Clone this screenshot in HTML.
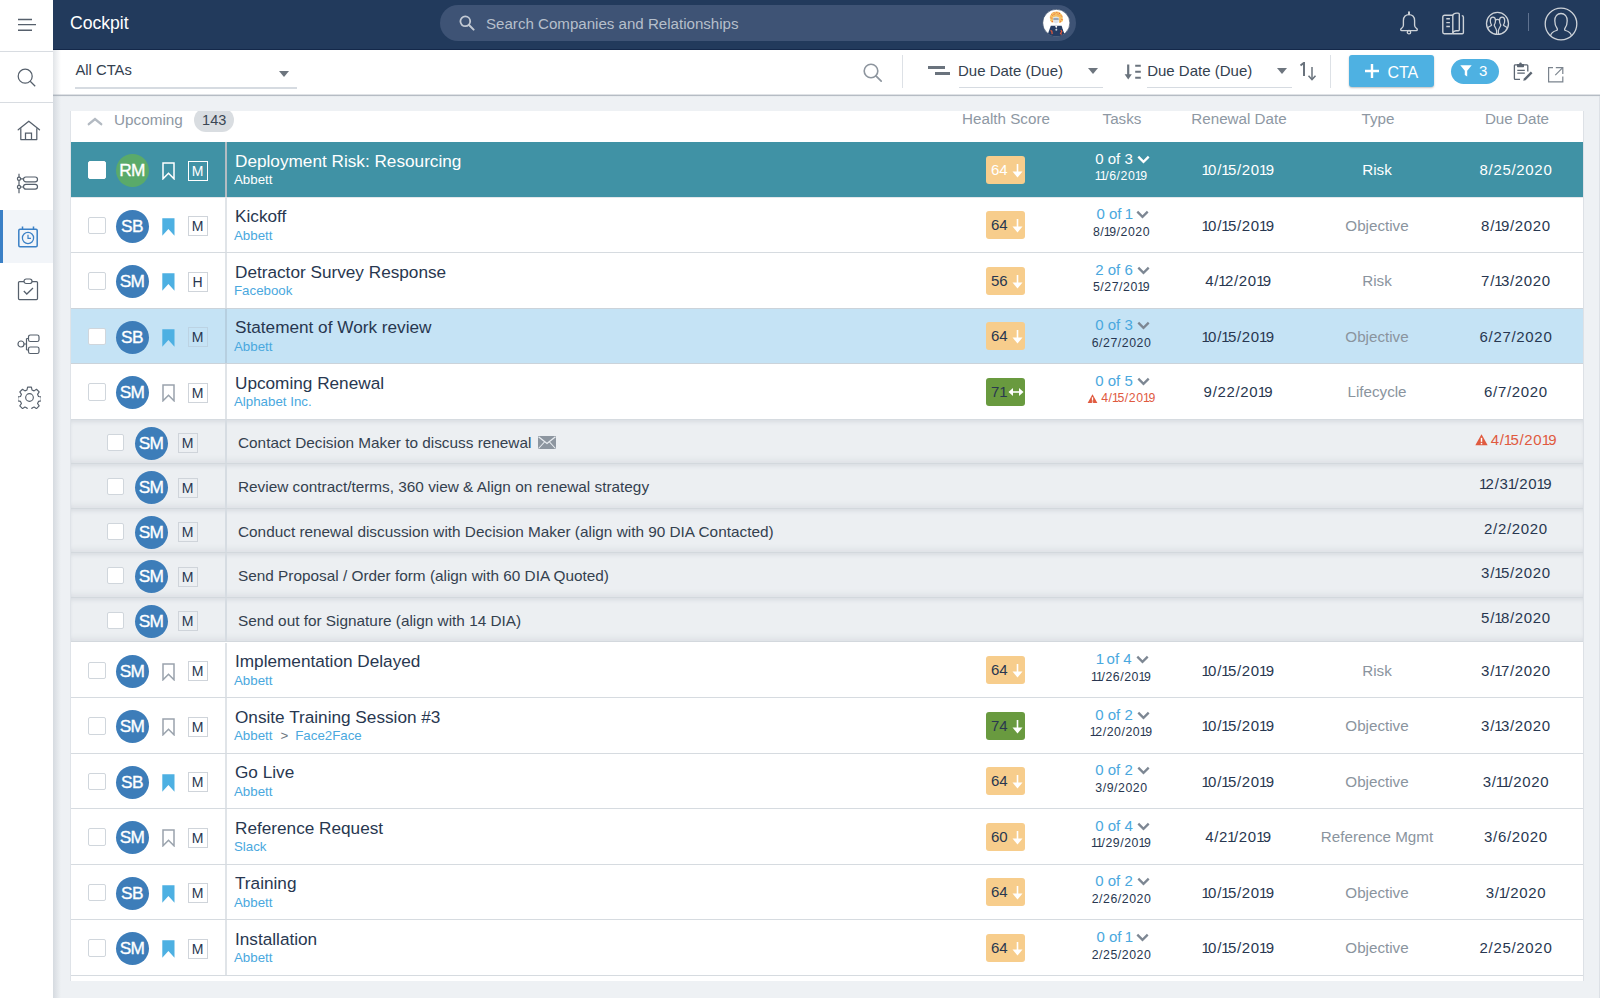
<!DOCTYPE html>
<html><head><meta charset="utf-8"><title>Cockpit</title>
<style>
*{box-sizing:border-box;margin:0;padding:0}
html,body{width:1600px;height:998px;overflow:hidden}
body{position:relative;background:#eef1f4;font-family:"Liberation Sans",sans-serif;color:#283750}
.abs{position:absolute}
#sidebar{position:absolute;left:0;top:0;width:53px;height:998px;background:#fff;z-index:3}
#sidebar .sep{position:absolute;left:0;width:53px;height:1px;background:#d8dce1}
#sidebar .active{position:absolute;left:0;top:210px;width:53px;height:53px;background:#f2f5f9}
#sidebar .active .bar{position:absolute;left:0;top:0;width:3px;height:53px;background:#3b80c6}
#sidebar svg{position:absolute}
#shadowL{position:absolute;left:53px;top:50px;width:8px;height:948px;background:linear-gradient(to right,rgba(150,160,172,0.28),rgba(150,160,172,0));z-index:2}
#header{position:absolute;left:53px;top:0;width:1547px;height:50px;background:#223a5c;border-bottom:1px solid #14284a}
#header .logo{position:absolute;left:17px;top:13px;font-size:17.6px;line-height:20px;color:#fff}
#search{position:absolute;left:387px;top:5px;width:636px;height:36px;border-radius:18px;background:#3e5375}
#search .ph{position:absolute;left:46px;top:10px;font-size:15.1px;line-height:18px;color:#b6bfcb;white-space:nowrap}
#toolbar{position:absolute;left:53px;top:50px;width:1547px;height:45.5px;background:#fff;border-bottom:1.5px solid #b9bfc6}
#toolbar .tshadow{position:absolute;left:0;top:44px;width:1547px;height:3px;background:linear-gradient(to bottom,rgba(170,178,188,0.45),rgba(170,178,188,0))}
.tt{position:absolute;white-space:nowrap;font-size:15px;line-height:18px;color:#34414f}
.uline{position:absolute;height:1.5px;background:#d6dbe1}
.ddtri{position:absolute;width:0;height:0;border-left:5.5px solid transparent;border-right:5.5px solid transparent;border-top:6px solid #6d757e}
.vsep{position:absolute;width:1px;background:#dde1e6}
#ctabtn{position:absolute;left:1296px;top:4.5px;width:85px;height:32.5px;background:#4eb1e2;border-radius:3px;box-shadow:0 1px 2px rgba(0,0,0,0.25)}
#ctabtn .lbl{position:absolute;left:38.5px;top:7px;font-size:16px;line-height:19px;color:#fff}
#filt{position:absolute;left:1398px;top:9px;width:47.5px;height:25.2px;border-radius:13px;background:#4eb1e2}
#filt .n{position:absolute;left:28px;top:4px;font-size:15px;line-height:18px;color:#fff}
#card{position:absolute;left:70px;top:111px;width:1514px;height:870px;background:#fff;border-left:1px solid #dfe3e8;border-right:1px solid #dde1e6}
#redge{position:absolute;left:1598.5px;top:96px;width:1.5px;height:902px;background:#dde1e6}
#thead{position:absolute;left:0;top:0;width:1512px;height:31px;overflow:hidden}
#thead .upchev{position:absolute;left:16px;top:4.5px}
#thead .upc{position:absolute;left:43px;top:0px;font-size:15.3px;line-height:18px;color:#8e98a3}
#thead .badge{position:absolute;left:123.2px;top:-3px;width:40px;height:24px;border-radius:12px;background:#d9dde1;font-size:14.5px;line-height:24px;text-align:center;color:#3a4654}
#thead .th{position:absolute;top:-0.8px;font-size:15.2px;line-height:18px;color:#8e98a3;text-align:center;white-space:nowrap}
#rows{position:absolute;left:0;top:0;width:1600px;height:998px}
.row{position:absolute;left:71px;width:1512px;background:#fff;border-bottom:1px solid #d6dbe0}
.row>div{position:absolute;white-space:nowrap}
.row.teal{background:#4092a5;border-bottom-color:#e3e7eb}
.row.lightblue{background:#c5e3f5;border-bottom-color:#cbd3da;box-shadow:0 -1px 0 #cbd3da}
.row.sub{background:#eceff2;border-bottom:1px solid #d3d8dd;box-shadow:inset 0 4px 4px -2px rgba(140,150,162,0.2),inset 0 -6px 5px -3px rgba(140,150,162,0.15)}
.cb{left:17px;width:17.6px;height:17.6px;border:1px solid #d0d6dc;border-radius:2px;background:#fff}
.teal .cb{border-color:#fff}
.scb{left:36px;width:17px;height:17px}
.av{left:44.5px;width:33px;height:33px;border-radius:50%;color:#fff;font-size:17.3px;line-height:32.6px;text-align:center;letter-spacing:-0.6px;-webkit-text-stroke:0.35px #fff}
.av.blue{background:#3d7db9}
.av.green{background:#5aaa6a}
.sav{left:63.5px}
.bmw{left:90.5px;width:14px;height:18px}
.bmw svg{display:block}
.pr{left:116.5px;width:20px;height:20px;border:1px solid #cfd4da;font-size:14px;line-height:18px;text-align:center;color:#283750;background:transparent}
.teal .pr{border-color:#fff;color:#fff}
.lightblue .pr{border-color:#bcd3e3}
.spr{left:106.5px}
.vdiv{left:154px;top:0;width:1.8px;height:100%;background:#e0e4e8}
.teal .vdiv{background:#b3bcc2}
.lightblue .vdiv{background:#b6cfe0}
.sub .vdiv{background:#d6dce2}
.title{left:164px;top:8.6px;font-size:17.2px;line-height:20px;color:#283750}
.teal .title{color:#fff}
.comp{left:163px;top:30.1px;font-size:13.3px;line-height:16px;color:#4aa8de}
.comp .gt{display:inline-block;margin:0 7px 0 8px;color:#6b7580}
.teal .comp{color:#fff}
.score{left:915px;width:39px;height:28px;border-radius:3px}
.score.orange{background:#f7cd8c}
.score.green{background:#699a3f}
.score .sn{position:absolute;left:5px;top:5px;font-size:15px;line-height:18px;color:#283750}
.teal .score .sn{color:#fff}
.score.green .sn{color:#2a3850}
.score .arr{position:absolute;left:26px;top:8px}
.score .arr2{position:absolute;left:22px;top:9px}
.tasks{left:989.5px;width:120px;text-align:center;top:7.6px;font-size:15px;line-height:17px;color:#4aa8de}
.teal .tasks{color:#fff}
.tasks .chev{display:inline-block;margin-left:4px;vertical-align:0px;margin-right:-4px}
.tdate{left:1000.5px;width:100px;text-align:center;top:27.3px;font-size:12.3px;line-height:14px;color:#283750}
.teal .tdate{color:#fff}
.tdate.warnc{color:#e05a3f}
.warn{display:inline-block;margin-right:3px;vertical-align:-1px}
.ren{left:1107.5px;width:120px;text-align:center;top:19.2px;font-size:15px;line-height:17px;color:#283750}
.typ{left:1246px;width:120px;text-align:center;top:19.1px;font-size:15.2px;line-height:17px;color:#8a949e}
.due{left:1385px;width:120px;text-align:center;top:19.1px;font-size:15px;line-height:17px;color:#283750}
.teal .ren,.teal .typ,.teal .due{color:#fff}
.stext{left:167px;top:13.8px;font-size:15.35px;line-height:17px;color:#34414f}
.stext .mail{display:inline-block;margin-left:7px;vertical-align:-1px}
.sdue{left:1385px;width:120px;text-align:center;top:11px;font-size:15px;line-height:17px;color:#283750}
.sdue.warnc{color:#e05a3f}

i.o{font-style:normal;letter-spacing:-0.11em;margin-left:-0.05em}
.dg{letter-spacing:0.045em}

</style></head>
<body>
<div id="sidebar">
<svg style="left:17px;top:18px" width="20" height="14" viewBox="0 0 20 14"><path d="M1 1.5H15M1 6.6H19M1 12.3H15" stroke="#56606c" stroke-width="1.4"/></svg>
<div class="sep" style="top:51px"></div>
<svg style="left:17px;top:68px" width="20" height="20" viewBox="0 0 20 20"><circle cx="8.2" cy="8.2" r="7" fill="none" stroke="#56606c" stroke-width="1.25"/><path d="M13.2 13.2L18.2 18.2" stroke="#56606c" stroke-width="1.25"/></svg>
<div class="sep" style="top:102px"></div>
<svg style="left:17px;top:120px" width="24" height="21" viewBox="0 0 24 21"><path d="M1.2 9.8L11.8 1.2L22.5 9.8" fill="none" stroke="#56606c" stroke-width="1.25" stroke-linecap="round" stroke-linejoin="round"/><path d="M3.8 8.2V19.5H19.8V8.2" fill="none" stroke="#56606c" stroke-width="1.25" stroke-linejoin="round"/><path d="M8.5 19.5V13.2H14.5V19.5" fill="none" stroke="#56606c" stroke-width="1.25"/></svg>
<svg style="left:16px;top:173px" width="23" height="21" viewBox="0 0 23 21"><path d="M3 0.8V20.2" stroke="#56606c" stroke-width="1.2"/><circle cx="3" cy="5.8" r="1.6" fill="#fff" stroke="#56606c" stroke-width="1.2"/><circle cx="3" cy="14" r="1.6" fill="#fff" stroke="#56606c" stroke-width="1.2"/><path d="M4.6 5.8H7.5M4.6 14H7.5" stroke="#56606c" stroke-width="1.2"/><rect x="7.5" y="4" width="14" height="4.8" rx="2.4" fill="none" stroke="#56606c" stroke-width="1.2"/><rect x="7.5" y="11.4" width="14" height="4.8" rx="2.4" fill="none" stroke="#56606c" stroke-width="1.2"/></svg>
<div class="active"><div class="bar"></div></div>
<svg style="left:17px;top:226px" width="22" height="22" viewBox="0 0 22 22"><rect x="1.8" y="3.2" width="18.4" height="17.5" rx="1.2" fill="none" stroke="#3b80c6" stroke-width="1.5"/><path d="M5.5 0.5V3.5M16.5 0.5V3.5" stroke="#3b80c6" stroke-width="1.5"/><circle cx="11" cy="12" r="5.6" fill="none" stroke="#3b80c6" stroke-width="1.25"/><path d="M11 8.8V12.3H14" fill="none" stroke="#3b80c6" stroke-width="1.2"/></svg>
<svg style="left:17px;top:278px" width="22" height="23" viewBox="0 0 22 23"><rect x="1.5" y="3.5" width="19" height="18" rx="1" fill="none" stroke="#56606c" stroke-width="1.25"/><rect x="7" y="1" width="8" height="4.5" rx="2.2" fill="#fff" stroke="#56606c" stroke-width="1.2"/><path d="M6.8 13L9.8 16L16 10" fill="none" stroke="#56606c" stroke-width="1.25"/></svg>
<svg style="left:17px;top:334px" width="24" height="21" viewBox="0 0 24 21"><circle cx="4" cy="10" r="3" fill="none" stroke="#56606c" stroke-width="1.2"/><path d="M7 10H9.5M9.5 4.5V16M9.5 4.5H11.5M9.5 16H11.5" fill="none" stroke="#56606c" stroke-width="1.2"/><rect x="11.5" y="1" width="10.5" height="6.5" rx="1.8" fill="none" stroke="#56606c" stroke-width="1.2"/><rect x="11.5" y="13" width="10.5" height="6.5" rx="1.8" fill="none" stroke="#56606c" stroke-width="1.2"/></svg>
<svg style="left:17.5px;top:385.5px" width="23" height="23" viewBox="0 0 24 24"><path d="M10 1.2h4l.6 2.9 2.2 1 2.5-1.7 2.8 2.8-1.7 2.5 1 2.2 2.9.6v4l-2.9.6-1 2.2 1.7 2.5-2.8 2.8-2.5-1.7-2.2 1-.6 2.9h-4l-.6-2.9-2.2-1-2.5 1.7-2.8-2.8 1.7-2.5-1-2.2-2.9-.6v-4l2.9-.6 1-2.2-1.7-2.5 2.8-2.8 2.5 1.7 2.2-1z" fill="none" stroke="#56606c" stroke-width="1.2" stroke-linejoin="round"/><circle cx="12" cy="12" r="4" fill="none" stroke="#56606c" stroke-width="1.2"/></svg>
</div>
<div id="shadowL"></div>

<div id="header">
<div class="logo" style="top:12.9px">Cockpit</div>
<div id="search">
<svg style="position:absolute;left:19px;top:10px" width="16" height="16" viewBox="0 0 16 16"><circle cx="6.3" cy="6.3" r="4.9" fill="none" stroke="#c3cad4" stroke-width="1.8"/><path d="M9.8 9.8L14.6 14.6" stroke="#c3cad4" stroke-width="2" stroke-linecap="round"/></svg>
<div class="ph">Search Companies and Relationships</div>
<svg style="position:absolute;left:602px;top:4.3px" width="28" height="28" viewBox="0 0 28 28"><defs><clipPath id="avc"><circle cx="14.3" cy="13.9" r="13.4"/></clipPath></defs><circle cx="14.3" cy="13.9" r="13.6" fill="#fff" stroke="#203656" stroke-width="0.6"/><g clip-path="url(#avc)"><path d="M8.5 10.5C7.2 9 7.8 6.5 9 5.5C9.5 3.5 11.5 2.6 13.5 2.8C15.5 2.2 18 3 19 4.8C20.5 5.8 21.2 8 20.6 9.6C21.8 10.8 21 12.8 19.5 13C18.8 14 17.5 14.2 16.8 13.5L17.2 8.5H11L11.5 13.2C10.5 14 9 13.2 8.8 12.2C8 12 7.8 11 8.5 10.5Z" fill="#f5c063"/><path d="M9.5 5.5L10.5 6.5M12 3.5L13 4.5M14.5 3.2L15.5 4.2M17 4L18 5M19 6.5L19.8 7.5M9 8.5L9.8 9.5M19.5 10L20.3 11M10 12L10.8 13M18.2 12L19 12.8M11.5 5L12.3 5.8M16 5.5L16.8 6.3" stroke="#e4573b" stroke-width="0.9"/><ellipse cx="14" cy="10.8" rx="2.9" ry="3.4" fill="#dbe2ea"/><path d="M11.3 10H16.7" stroke="#4d5e73" stroke-width="0.9"/><path d="M13.3 14H14.7V17H13.3Z" fill="#f4f6f8"/><path d="M8.8 16.8H19.6L23.5 28H4.8Z" fill="#243c63"/><path d="M13 16.8L14.2 19.5L15.4 16.8" fill="#fff"/><circle cx="14.3" cy="20.8" r="1" fill="#c8d2dc"/><path d="M8.5 21.5L9.8 22.2L10.2 25.2M18.8 21L19.8 22.5L18.5 24.5L19.6 25.5" fill="none" stroke="#e85a3a" stroke-width="1.2"/><path d="M21 19.5L23 24" stroke="#fff" stroke-width="1"/></g></svg>
</div>
</div>
<div id="toolbar"><div class="tshadow"></div></div>
<div id="tb" style="position:absolute;left:0;top:0;width:1600px;height:100px;z-index:4">
<!-- header icons -->
<svg style="position:absolute;left:1399px;top:11px" width="20" height="24" viewBox="0 0 20 24"><path d="M10 1.2V3.2" stroke="#cdd2d8" stroke-width="2" stroke-linecap="round"/><path d="M10 3.6C6.9 3.6 4.4 5.6 4.4 9.6V14.3C4.4 15.8 3.5 16.9 2.3 17.6C1.3 18.2 1.6 19.6 2.7 19.6H17.3C18.4 19.6 18.7 18.2 17.7 17.6C16.5 16.9 15.6 15.8 15.6 14.3V9.6C15.6 5.6 13.1 3.6 10 3.6Z" fill="none" stroke="#cdd2d8" stroke-width="1.35" stroke-linejoin="round"/><circle cx="10" cy="21.2" r="1.7" fill="none" stroke="#cdd2d8" stroke-width="1.3"/></svg>
<svg style="position:absolute;left:1441px;top:11.5px" width="24" height="23" viewBox="0 0 24 23"><path d="M11.8 21.7H3.2C2.4 21.7 1.8 21.1 1.8 20.3V5C1.8 4 2.6 3.3 3.6 3.3H11.8V21.7" fill="none" stroke="#cdd2d8" stroke-width="1.4" stroke-linejoin="round"/><path d="M11.8 3.3C12.3 1.8 13.8 1.1 15.5 1.1H17.2C17.9 1.1 18.3 1.5 18.3 2.2V17.8C18.3 18.4 17.9 18.7 17.3 18.7H15C13.3 18.7 12.2 19.5 11.8 20.8" fill="none" stroke="#cdd2d8" stroke-width="1.4" stroke-linejoin="round"/><path d="M20.8 3.6C21.8 3.6 22.4 4.2 22.4 5V20.4C22.4 21.1 21.9 21.7 21.2 21.7H11.8" fill="none" stroke="#cdd2d8" stroke-width="1.4" stroke-linejoin="round"/><path d="M5.3 6.8H8.9M5.3 10.6H8.9M5.3 14.5H8.9" stroke="#cdd2d8" stroke-width="1.4"/></svg>
<svg style="position:absolute;left:1485px;top:10.8px" width="25" height="25" viewBox="0 0 25 25"><circle cx="12.5" cy="12.4" r="11" fill="none" stroke="#cdd2d8" stroke-width="1.3"/><path d="M2.4 16.8C4 15.6 5.8 15.2 6.6 14.2C5.6 12.8 5.3 11 5.3 9.4C5.3 7.3 6.3 6.2 7.9 6.2C9.5 6.2 10.5 7.3 10.5 9.4C10.5 11 10.1 12.8 9.2 14.2C9.6 15.8 11.3 17.3 11.6 19.6V23.2" fill="none" stroke="#cdd2d8" stroke-width="1.25" stroke-linejoin="round"/><path d="M22.6 16.8C21 15.6 19.2 15.2 18.4 14.2C19.4 12.8 19.7 11 19.7 9.4C19.7 7.3 18.7 6.2 17.1 6.2C15.5 6.2 14.5 7.3 14.5 9.4C14.5 11 14.9 12.8 15.8 14.2C15.4 15.8 13.7 17.3 13.4 19.6V23.2" fill="none" stroke="#cdd2d8" stroke-width="1.25" stroke-linejoin="round"/><path d="M10.4 9.2Q12.5 7.6 14.6 9.2" fill="none" stroke="#cdd2d8" stroke-width="1.1"/></svg>
<div style="position:absolute;left:1527.5px;top:13px;width:1px;height:18px;background:#5f7290"></div>
<svg style="position:absolute;left:1544px;top:6.5px" width="34" height="34" viewBox="0 0 34 34"><circle cx="17" cy="17" r="15.8" fill="none" stroke="#cdd2d8" stroke-width="1.3"/><path d="M6.5 29C7 26 9 24.5 12.5 23.5C13.5 23.2 13.6 22 13 21.2C11.5 19.5 10.8 17 10.8 13.8C10.8 9.5 13.3 6.5 17 6.5C20.7 6.5 23.2 9.5 23.2 13.8C23.2 17 22.5 19.5 21 21.2C20.4 22 20.5 23.2 21.5 23.5C25 24.5 27 26 27.5 29" fill="none" stroke="#cdd2d8" stroke-width="1.3"/></svg>
<!-- toolbar -->
<div class="tt" style="left:75.5px;top:61.4px;font-size:14.75px">All CTAs</div>
<div class="ddtri" style="left:278.5px;top:70.7px"></div>
<div class="uline" style="left:75px;top:87px;width:222px"></div>
<svg style="position:absolute;left:863px;top:63px" width="20" height="20" viewBox="0 0 20 20"><circle cx="8" cy="8" r="6.8" fill="none" stroke="#8d959e" stroke-width="1.6"/><path d="M12.9 12.9L18.2 18.2" stroke="#8d959e" stroke-width="1.7" stroke-linecap="round"/></svg>
<div class="vsep" style="left:902px;top:54.5px;height:33px"></div>
<div style="position:absolute;left:928px;top:66.2px;width:17px;height:3.3px;background:#6a737d"></div>
<div style="position:absolute;left:934.8px;top:72.2px;width:15.6px;height:3.1px;background:#6a737d"></div>
<div class="tt" style="left:958px;top:61.5px">Due Date (Due)</div>
<div class="ddtri" style="left:1088px;top:67.5px"></div>
<div class="uline" style="left:958.5px;top:86.5px;width:144px"></div>
<svg style="position:absolute;left:1124px;top:64px" width="18" height="16" viewBox="0 0 18 16"><path d="M4.2 0.5V12" stroke="#6a737d" stroke-width="2.2"/><path d="M0.6 10.2H7.8L4.2 15.6Z" fill="#6a737d"/><path d="M11.2 1.8H16.8M11.2 7.8H16.8M11.2 13.8H16.8" stroke="#6a737d" stroke-width="2"/></svg>
<div class="tt" style="left:1147.2px;top:61.5px">Due Date (Due)</div>
<div class="ddtri" style="left:1277px;top:67.7px"></div>
<div class="uline" style="left:1147px;top:86.5px;width:144.6px"></div>
<svg style="position:absolute;left:1299px;top:62px" width="18" height="19" viewBox="0 0 18 19"><path d="M1.5 3.5L5 0.8V14" fill="none" stroke="#6a737d" stroke-width="2"/><path d="M13 5V17" stroke="#6a737d" stroke-width="1.5"/><path d="M9.5 13.8L13 17.6L16.5 13.8" fill="none" stroke="#6a737d" stroke-width="1.5"/></svg>
<div class="vsep" style="left:1330px;top:54.7px;height:33px"></div>
<div id="ctabtn" style="left:1348.9px;top:54.5px">
<svg style="position:absolute;left:16.3px;top:9.8px" width="14" height="14" viewBox="0 0 14 14"><path d="M7 0V14M0 7H14" stroke="#fff" stroke-width="2.4"/></svg>
<div class="lbl" style="top:8px">CTA</div></div>
<div id="filt" style="left:1451px;top:58.9px">
<svg style="position:absolute;left:9px;top:6.4px" width="12" height="12" viewBox="0 0 12 12"><path d="M0.3 0.3H11.7L7.2 5.8V11.6L4.8 10V5.8Z" fill="#fff"/></svg>
<div class="n" style="top:3.6px">3</div></div>
<svg style="position:absolute;left:1513px;top:61.5px" width="21" height="20" viewBox="0 0 21 20"><path d="M4.2 2.8H2.3C1.8 2.8 1.4 3.2 1.4 3.7V16.5C1.4 17 1.8 17.4 2.3 17.4H7" fill="none" stroke="#5c6672" stroke-width="1.3"/><path d="M10.8 2.8H13.9C14.4 2.8 14.8 3.2 14.8 3.7V9.5" fill="none" stroke="#5c6672" stroke-width="1.3"/><path d="M4 2H11V4.6C11 5 10.7 5.2 10.4 5.2H4.6C4.3 5.2 4 5 4 4.6Z" fill="#5c6672"/><circle cx="7.5" cy="1.6" r="1.2" fill="#5c6672"/><path d="M4.3 8.3H11.8M4.3 11.2H11.8" stroke="#5c6672" stroke-width="1.3"/><path d="M10.2 18.8L10.9 16.5L17.8 9.6L19.5 11.3L12.6 18.2Z" fill="#5c6672"/></svg>
<svg style="position:absolute;left:1547px;top:65.5px" width="17" height="17" viewBox="0 0 17 17"><path d="M6 1.6H1.6V15.8H15.8V10.5" fill="none" stroke="#7a838d" stroke-width="1.2"/><path d="M8.8 1.6H15.8V8" fill="none" stroke="#7a838d" stroke-width="1.2"/><path d="M15.5 1.9L8.3 9.1" stroke="#7a838d" stroke-width="1.2"/></svg>
</div>

<div id="card">
<div id="thead">
<svg class="upchev" width="16" height="10" viewBox="0 0 16 10"><path d="M1.8 8.2L8 3L14.2 8.2" fill="none" stroke="#b3bac2" stroke-width="2.4" stroke-linecap="round"/></svg>
<span class="upc">Upcoming</span><span class="badge">143</span>
<span class="th" style="left:875px;width:120px">Health Score</span>
<span class="th" style="left:991px;width:120px">Tasks</span>
<span class="th" style="left:1108px;width:120px">Renewal Date</span>
<span class="th" style="left:1247px;width:120px">Type</span>
<span class="th" style="left:1386px;width:120px">Due Date</span>
</div>
</div>
<div id="redge"></div>
<div id="rows">
<div class="row teal" style="top:142.0px;height:55.55px">
<div class="cb" style="top:19.2px"></div>
<div class="av green" style="top:12.1px">RM</div>
<div class="bmw" style="top:20.2px"><svg class="bm" width="13" height="18" viewBox="0 0 13 18"><path d="M1 1H12V16.8L6.5 11.2L1 16.8Z" fill="none" stroke="#ffffff" stroke-width="1.5" stroke-linejoin="miter"/></svg></div>
<div class="pr" style="top:18.5px">M</div>
<div class="vdiv"></div>
<div class="title">Deployment Risk: Resourcing</div>
<div class="comp">Abbett</div>
<div class="score orange" style="top:13.8px"><span class="sn">64</span><svg class="arr" width="11" height="14" viewBox="0 0 11 14"><rect x="4.7" y="0" width="1.6" height="8" fill="#ffffff"/><path d="M0.5 7.5H10.5L5.5 13.5Z" fill="#ffffff"/></svg></div>
<div class="tasks"><span class="tn">0 of 3</span><svg class="chev" width="13" height="9" viewBox="0 0 13 9"><path d="M1.3 1.6L6.5 6.8L11.7 1.6" fill="none" stroke="#ffffff" stroke-width="2.3"/></svg></div>
<div class="tdate"><span class="dg"><i class="o">1</i><i class="o">1</i>/6/20<i class="o">1</i>9</span></div>
<div class="ren"><span class="dg"><i class="o">1</i>0/<i class="o">1</i>5/20<i class="o">1</i>9</span></div>
<div class="typ">Risk</div>
<div class="due"><span class="dg">8/25/2020</span></div>
</div>
<div class="row normal" style="top:197.55px;height:55.55px">
<div class="cb" style="top:19.2px"></div>
<div class="av blue" style="top:12.1px">SB</div>
<div class="bmw" style="top:20.2px"><svg class="bm" width="13" height="18" viewBox="0 0 13 18"><path d="M0.3 0.3H12.5V17.8L6.4 11L0.3 17.8Z" fill="#4db0e2"/></svg></div>
<div class="pr" style="top:18.5px">M</div>
<div class="vdiv"></div>
<div class="title">Kickoff</div>
<div class="comp">Abbett</div>
<div class="score orange" style="top:13.8px"><span class="sn">64</span><svg class="arr" width="11" height="14" viewBox="0 0 11 14"><rect x="4.7" y="0" width="1.6" height="8" fill="#ffffff"/><path d="M0.5 7.5H10.5L5.5 13.5Z" fill="#ffffff"/></svg></div>
<div class="tasks"><span class="tn">0 of <i class="o">1</i></span><svg class="chev" width="13" height="9" viewBox="0 0 13 9"><path d="M1.3 1.6L6.5 6.8L11.7 1.6" fill="none" stroke="#7d8793" stroke-width="2.3"/></svg></div>
<div class="tdate"><span class="dg">8/<i class="o">1</i>9/2020</span></div>
<div class="ren"><span class="dg"><i class="o">1</i>0/<i class="o">1</i>5/20<i class="o">1</i>9</span></div>
<div class="typ">Objective</div>
<div class="due"><span class="dg">8/<i class="o">1</i>9/2020</span></div>
</div>
<div class="row normal" style="top:253.10000000000002px;height:55.55px">
<div class="cb" style="top:19.2px"></div>
<div class="av blue" style="top:12.1px">SM</div>
<div class="bmw" style="top:20.2px"><svg class="bm" width="13" height="18" viewBox="0 0 13 18"><path d="M0.3 0.3H12.5V17.8L6.4 11L0.3 17.8Z" fill="#4db0e2"/></svg></div>
<div class="pr" style="top:18.5px">H</div>
<div class="vdiv"></div>
<div class="title">Detractor Survey Response</div>
<div class="comp">Facebook</div>
<div class="score orange" style="top:13.8px"><span class="sn">56</span><svg class="arr" width="11" height="14" viewBox="0 0 11 14"><rect x="4.7" y="0" width="1.6" height="8" fill="#ffffff"/><path d="M0.5 7.5H10.5L5.5 13.5Z" fill="#ffffff"/></svg></div>
<div class="tasks"><span class="tn">2 of 6</span><svg class="chev" width="13" height="9" viewBox="0 0 13 9"><path d="M1.3 1.6L6.5 6.8L11.7 1.6" fill="none" stroke="#7d8793" stroke-width="2.3"/></svg></div>
<div class="tdate"><span class="dg">5/27/20<i class="o">1</i>9</span></div>
<div class="ren"><span class="dg">4/<i class="o">1</i>2/20<i class="o">1</i>9</span></div>
<div class="typ">Risk</div>
<div class="due"><span class="dg">7/<i class="o">1</i>3/2020</span></div>
</div>
<div class="row lightblue" style="top:308.65000000000003px;height:55.55px">
<div class="cb" style="top:19.2px"></div>
<div class="av blue" style="top:12.1px">SB</div>
<div class="bmw" style="top:20.2px"><svg class="bm" width="13" height="18" viewBox="0 0 13 18"><path d="M0.3 0.3H12.5V17.8L6.4 11L0.3 17.8Z" fill="#4db0e2"/></svg></div>
<div class="pr" style="top:18.5px">M</div>
<div class="vdiv"></div>
<div class="title">Statement of Work review</div>
<div class="comp">Abbett</div>
<div class="score orange" style="top:13.8px"><span class="sn">64</span><svg class="arr" width="11" height="14" viewBox="0 0 11 14"><rect x="4.7" y="0" width="1.6" height="8" fill="#ffffff"/><path d="M0.5 7.5H10.5L5.5 13.5Z" fill="#ffffff"/></svg></div>
<div class="tasks"><span class="tn">0 of 3</span><svg class="chev" width="13" height="9" viewBox="0 0 13 9"><path d="M1.3 1.6L6.5 6.8L11.7 1.6" fill="none" stroke="#7d8793" stroke-width="2.3"/></svg></div>
<div class="tdate"><span class="dg">6/27/2020</span></div>
<div class="ren"><span class="dg"><i class="o">1</i>0/<i class="o">1</i>5/20<i class="o">1</i>9</span></div>
<div class="typ">Objective</div>
<div class="due"><span class="dg">6/27/2020</span></div>
</div>
<div class="row normal" style="top:364.20000000000005px;height:55.55px">
<div class="cb" style="top:19.2px"></div>
<div class="av blue" style="top:12.1px">SM</div>
<div class="bmw" style="top:20.2px"><svg class="bm" width="13" height="18" viewBox="0 0 13 18"><path d="M1 1H12V16.8L6.5 11.2L1 16.8Z" fill="none" stroke="#9aa3ad" stroke-width="1.5" stroke-linejoin="miter"/></svg></div>
<div class="pr" style="top:18.5px">M</div>
<div class="vdiv"></div>
<div class="title">Upcoming Renewal</div>
<div class="comp">Alphabet Inc.</div>
<div class="score green" style="top:13.8px"><span class="sn">71</span><svg class="arr2" width="16" height="10" viewBox="0 0 16 10"><path d="M0.5 5L5 1V9Z M15.5 5L11 1V9Z" fill="#ffffff"/><rect x="4" y="4.2" width="8" height="1.6" fill="#ffffff"/></svg></div>
<div class="tasks"><span class="tn">0 of 5</span><svg class="chev" width="13" height="9" viewBox="0 0 13 9"><path d="M1.3 1.6L6.5 6.8L11.7 1.6" fill="none" stroke="#7d8793" stroke-width="2.3"/></svg></div>
<div class="tdate warnc"><svg class="warn" width="11" height="9.9" viewBox="0 0 12 11"><path d="M6 0.3L11.8 10.7H0.2Z" fill="#e05a3f"/><rect x="5.3" y="3.6" width="1.4" height="3.8" fill="#fff"/><rect x="5.3" y="8.3" width="1.4" height="1.4" fill="#fff"/></svg><span class="dg">4/<i class="o">1</i>5/20<i class="o">1</i>9</span></div>
<div class="ren"><span class="dg">9/22/20<i class="o">1</i>9</span></div>
<div class="typ">Lifecycle</div>
<div class="due"><span class="dg">6/7/2020</span></div>
</div>
<div class="row sub" style="top:419.75000000000006px;height:44.55px">
<div class="cb scb" style="top:13.8px"></div>
<div class="av blue sav" style="top:7.0px">SM</div>
<div class="pr spr" style="top:13.3px">M</div>
<div class="vdiv"></div>
<div class="stext">Contact Decision Maker to discuss renewal<svg class="mail" width="18" height="13" viewBox="0 0 18 13"><path d="M0 0H18V13H0Z" fill="#8d96a0"/><path d="M0.5 0.8L9 7.5L17.5 0.8" fill="none" stroke="#e9edf1" stroke-width="1.3"/><path d="M0.5 12.5L6.5 6 M17.5 12.5L11.5 6" stroke="#e9edf1" stroke-width="1.1"/></svg></div>
<div class="sdue warnc"><svg class="warn" width="13" height="11.7" viewBox="0 0 12 11"><path d="M6 0.3L11.8 10.7H0.2Z" fill="#e05a3f"/><rect x="5.3" y="3.6" width="1.4" height="3.8" fill="#fff"/><rect x="5.3" y="8.3" width="1.4" height="1.4" fill="#fff"/></svg><span class="dg">4/<i class="o">1</i>5/20<i class="o">1</i>9</span></div>
</div>
<div class="row sub" style="top:464.30000000000007px;height:44.55px">
<div class="cb scb" style="top:13.8px"></div>
<div class="av blue sav" style="top:7.0px">SM</div>
<div class="pr spr" style="top:13.3px">M</div>
<div class="vdiv"></div>
<div class="stext">Review contract/terms, 360 view &amp; Align on renewal strategy</div>
<div class="sdue"><span class="dg"><i class="o">1</i>2/3<i class="o">1</i>/20<i class="o">1</i>9</span></div>
</div>
<div class="row sub" style="top:508.8500000000001px;height:44.55px">
<div class="cb scb" style="top:13.8px"></div>
<div class="av blue sav" style="top:7.0px">SM</div>
<div class="pr spr" style="top:13.3px">M</div>
<div class="vdiv"></div>
<div class="stext">Conduct renewal discussion with Decision Maker (align with 90 DIA Contacted)</div>
<div class="sdue"><span class="dg">2/2/2020</span></div>
</div>
<div class="row sub" style="top:553.4000000000001px;height:44.55px">
<div class="cb scb" style="top:13.8px"></div>
<div class="av blue sav" style="top:7.0px">SM</div>
<div class="pr spr" style="top:13.3px">M</div>
<div class="vdiv"></div>
<div class="stext">Send Proposal / Order form (align with 60 DIA Quoted)</div>
<div class="sdue"><span class="dg">3/<i class="o">1</i>5/2020</span></div>
</div>
<div class="row sub" style="top:597.95px;height:44.55px">
<div class="cb scb" style="top:13.8px"></div>
<div class="av blue sav" style="top:7.0px">SM</div>
<div class="pr spr" style="top:13.3px">M</div>
<div class="vdiv"></div>
<div class="stext">Send out for Signature (align with 14 DIA)</div>
<div class="sdue"><span class="dg">5/<i class="o">1</i>8/2020</span></div>
</div>
<div class="row normal" style="top:642.5px;height:55.55px">
<div class="cb" style="top:19.2px"></div>
<div class="av blue" style="top:12.1px">SM</div>
<div class="bmw" style="top:20.2px"><svg class="bm" width="13" height="18" viewBox="0 0 13 18"><path d="M1 1H12V16.8L6.5 11.2L1 16.8Z" fill="none" stroke="#9aa3ad" stroke-width="1.5" stroke-linejoin="miter"/></svg></div>
<div class="pr" style="top:18.5px">M</div>
<div class="vdiv"></div>
<div class="title">Implementation Delayed</div>
<div class="comp">Abbett</div>
<div class="score orange" style="top:13.8px"><span class="sn">64</span><svg class="arr" width="11" height="14" viewBox="0 0 11 14"><rect x="4.7" y="0" width="1.6" height="8" fill="#ffffff"/><path d="M0.5 7.5H10.5L5.5 13.5Z" fill="#ffffff"/></svg></div>
<div class="tasks"><span class="tn"><i class="o">1</i> of 4</span><svg class="chev" width="13" height="9" viewBox="0 0 13 9"><path d="M1.3 1.6L6.5 6.8L11.7 1.6" fill="none" stroke="#7d8793" stroke-width="2.3"/></svg></div>
<div class="tdate"><span class="dg"><i class="o">1</i><i class="o">1</i>/26/20<i class="o">1</i>9</span></div>
<div class="ren"><span class="dg"><i class="o">1</i>0/<i class="o">1</i>5/20<i class="o">1</i>9</span></div>
<div class="typ">Risk</div>
<div class="due"><span class="dg">3/<i class="o">1</i>7/2020</span></div>
</div>
<div class="row normal" style="top:698.05px;height:55.55px">
<div class="cb" style="top:19.2px"></div>
<div class="av blue" style="top:12.1px">SM</div>
<div class="bmw" style="top:20.2px"><svg class="bm" width="13" height="18" viewBox="0 0 13 18"><path d="M1 1H12V16.8L6.5 11.2L1 16.8Z" fill="none" stroke="#9aa3ad" stroke-width="1.5" stroke-linejoin="miter"/></svg></div>
<div class="pr" style="top:18.5px">M</div>
<div class="vdiv"></div>
<div class="title">Onsite Training Session #3</div>
<div class="comp">Abbett<span class="gt">&gt;</span>Face2Face</div>
<div class="score green" style="top:13.8px"><span class="sn">74</span><svg class="arr" width="11" height="14" viewBox="0 0 11 14"><rect x="4.7" y="0" width="1.6" height="8" fill="#ffffff"/><path d="M0.5 7.5H10.5L5.5 13.5Z" fill="#ffffff"/></svg></div>
<div class="tasks"><span class="tn">0 of 2</span><svg class="chev" width="13" height="9" viewBox="0 0 13 9"><path d="M1.3 1.6L6.5 6.8L11.7 1.6" fill="none" stroke="#7d8793" stroke-width="2.3"/></svg></div>
<div class="tdate"><span class="dg"><i class="o">1</i>2/20/20<i class="o">1</i>9</span></div>
<div class="ren"><span class="dg"><i class="o">1</i>0/<i class="o">1</i>5/20<i class="o">1</i>9</span></div>
<div class="typ">Objective</div>
<div class="due"><span class="dg">3/<i class="o">1</i>3/2020</span></div>
</div>
<div class="row normal" style="top:753.5999999999999px;height:55.55px">
<div class="cb" style="top:19.2px"></div>
<div class="av blue" style="top:12.1px">SB</div>
<div class="bmw" style="top:20.2px"><svg class="bm" width="13" height="18" viewBox="0 0 13 18"><path d="M0.3 0.3H12.5V17.8L6.4 11L0.3 17.8Z" fill="#4db0e2"/></svg></div>
<div class="pr" style="top:18.5px">M</div>
<div class="vdiv"></div>
<div class="title">Go Live</div>
<div class="comp">Abbett</div>
<div class="score orange" style="top:13.8px"><span class="sn">64</span><svg class="arr" width="11" height="14" viewBox="0 0 11 14"><rect x="4.7" y="0" width="1.6" height="8" fill="#ffffff"/><path d="M0.5 7.5H10.5L5.5 13.5Z" fill="#ffffff"/></svg></div>
<div class="tasks"><span class="tn">0 of 2</span><svg class="chev" width="13" height="9" viewBox="0 0 13 9"><path d="M1.3 1.6L6.5 6.8L11.7 1.6" fill="none" stroke="#7d8793" stroke-width="2.3"/></svg></div>
<div class="tdate"><span class="dg">3/9/2020</span></div>
<div class="ren"><span class="dg"><i class="o">1</i>0/<i class="o">1</i>5/20<i class="o">1</i>9</span></div>
<div class="typ">Objective</div>
<div class="due"><span class="dg">3/<i class="o">1</i><i class="o">1</i>/2020</span></div>
</div>
<div class="row normal" style="top:809.1499999999999px;height:55.55px">
<div class="cb" style="top:19.2px"></div>
<div class="av blue" style="top:12.1px">SM</div>
<div class="bmw" style="top:20.2px"><svg class="bm" width="13" height="18" viewBox="0 0 13 18"><path d="M1 1H12V16.8L6.5 11.2L1 16.8Z" fill="none" stroke="#9aa3ad" stroke-width="1.5" stroke-linejoin="miter"/></svg></div>
<div class="pr" style="top:18.5px">M</div>
<div class="vdiv"></div>
<div class="title">Reference Request</div>
<div class="comp">Slack</div>
<div class="score orange" style="top:13.8px"><span class="sn">60</span><svg class="arr" width="11" height="14" viewBox="0 0 11 14"><rect x="4.7" y="0" width="1.6" height="8" fill="#ffffff"/><path d="M0.5 7.5H10.5L5.5 13.5Z" fill="#ffffff"/></svg></div>
<div class="tasks"><span class="tn">0 of 4</span><svg class="chev" width="13" height="9" viewBox="0 0 13 9"><path d="M1.3 1.6L6.5 6.8L11.7 1.6" fill="none" stroke="#7d8793" stroke-width="2.3"/></svg></div>
<div class="tdate"><span class="dg"><i class="o">1</i><i class="o">1</i>/29/20<i class="o">1</i>9</span></div>
<div class="ren"><span class="dg">4/2<i class="o">1</i>/20<i class="o">1</i>9</span></div>
<div class="typ">Reference Mgmt</div>
<div class="due"><span class="dg">3/6/2020</span></div>
</div>
<div class="row normal" style="top:864.6999999999998px;height:55.55px">
<div class="cb" style="top:19.2px"></div>
<div class="av blue" style="top:12.1px">SB</div>
<div class="bmw" style="top:20.2px"><svg class="bm" width="13" height="18" viewBox="0 0 13 18"><path d="M0.3 0.3H12.5V17.8L6.4 11L0.3 17.8Z" fill="#4db0e2"/></svg></div>
<div class="pr" style="top:18.5px">M</div>
<div class="vdiv"></div>
<div class="title">Training</div>
<div class="comp">Abbett</div>
<div class="score orange" style="top:13.8px"><span class="sn">64</span><svg class="arr" width="11" height="14" viewBox="0 0 11 14"><rect x="4.7" y="0" width="1.6" height="8" fill="#ffffff"/><path d="M0.5 7.5H10.5L5.5 13.5Z" fill="#ffffff"/></svg></div>
<div class="tasks"><span class="tn">0 of 2</span><svg class="chev" width="13" height="9" viewBox="0 0 13 9"><path d="M1.3 1.6L6.5 6.8L11.7 1.6" fill="none" stroke="#7d8793" stroke-width="2.3"/></svg></div>
<div class="tdate"><span class="dg">2/26/2020</span></div>
<div class="ren"><span class="dg"><i class="o">1</i>0/<i class="o">1</i>5/20<i class="o">1</i>9</span></div>
<div class="typ">Objective</div>
<div class="due"><span class="dg">3/<i class="o">1</i>/2020</span></div>
</div>
<div class="row normal" style="top:920.2499999999998px;height:55.55px">
<div class="cb" style="top:19.2px"></div>
<div class="av blue" style="top:12.1px">SM</div>
<div class="bmw" style="top:20.2px"><svg class="bm" width="13" height="18" viewBox="0 0 13 18"><path d="M0.3 0.3H12.5V17.8L6.4 11L0.3 17.8Z" fill="#4db0e2"/></svg></div>
<div class="pr" style="top:18.5px">M</div>
<div class="vdiv"></div>
<div class="title">Installation</div>
<div class="comp">Abbett</div>
<div class="score orange" style="top:13.8px"><span class="sn">64</span><svg class="arr" width="11" height="14" viewBox="0 0 11 14"><rect x="4.7" y="0" width="1.6" height="8" fill="#ffffff"/><path d="M0.5 7.5H10.5L5.5 13.5Z" fill="#ffffff"/></svg></div>
<div class="tasks"><span class="tn">0 of <i class="o">1</i></span><svg class="chev" width="13" height="9" viewBox="0 0 13 9"><path d="M1.3 1.6L6.5 6.8L11.7 1.6" fill="none" stroke="#7d8793" stroke-width="2.3"/></svg></div>
<div class="tdate"><span class="dg">2/25/2020</span></div>
<div class="ren"><span class="dg"><i class="o">1</i>0/<i class="o">1</i>5/20<i class="o">1</i>9</span></div>
<div class="typ">Objective</div>
<div class="due"><span class="dg">2/25/2020</span></div>
</div>
</div>
</body></html>
